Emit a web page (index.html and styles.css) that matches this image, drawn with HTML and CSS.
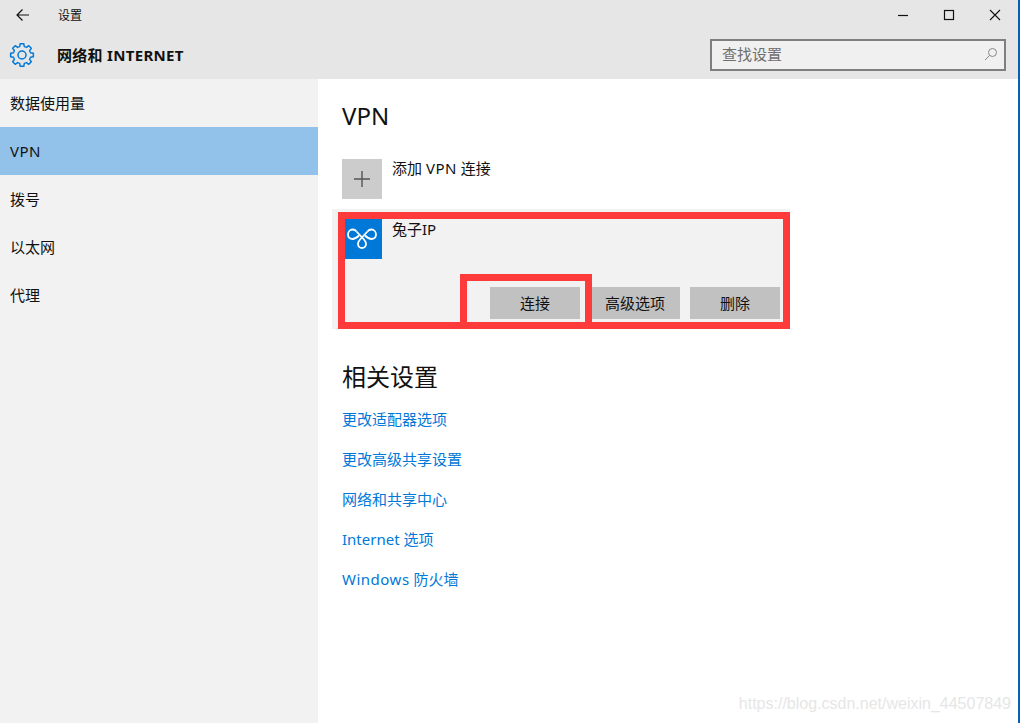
FILE: index.html
```html
<!DOCTYPE html>
<html lang="zh-CN">
<head>
    <meta charset="UTF-8">
    <title>设置</title>
    <link rel="stylesheet" href="styles.css">
</head>
<body>
    <div class="window">
        <header class="header">
            <div class="titlebar">
                <svg class="back" width="16" height="14" viewBox="0 0 16 14"><path d="M14 7H2M7.500 1.500L2 7l5.500 5.500" fill="none" stroke="#111" stroke-width="1.200"/></svg>
                <span class="title">设置</span>
                <div class="controls">
                    <svg width="12" height="12" viewBox="0 0 12 12"><path d="M1 6.500h10" stroke="#111" stroke-width="1.200"/></svg>
                    <svg width="12" height="12" viewBox="0 0 12 12"><rect x="1.500" y="1.500" width="9" height="9" fill="none" stroke="#111" stroke-width="1.200"/></svg>
                    <svg width="12" height="12" viewBox="0 0 12 12"><path d="M1 1l10 10M11 1L1 11" stroke="#111" stroke-width="1.100"/></svg>
                </div>
            </div>
            <div class="pagebar">
                <svg class="gear" width="26" height="26" viewBox="0 0 26 26">
                    <g fill="none" stroke="#0078d7" stroke-width="1.500" stroke-linejoin="round">
                        <path id="tooth" d="M9.630 4.870L10.720 4.500 11.200 1.640H14.800L15.280 4.500 16.370 4.870"/>
                        <use href="#tooth" transform="rotate(45 13 13)"/>
                        <use href="#tooth" transform="rotate(90 13 13)"/>
                        <use href="#tooth" transform="rotate(135 13 13)"/>
                        <use href="#tooth" transform="rotate(180 13 13)"/>
                        <use href="#tooth" transform="rotate(225 13 13)"/>
                        <use href="#tooth" transform="rotate(270 13 13)"/>
                        <use href="#tooth" transform="rotate(315 13 13)"/>
                        <circle cx="13" cy="13" r="4"/>
                    </g>
                </svg>
                <h1 class="pagename">网络和 INTERNET</h1>
                <div class="search">
                    <span>查找设置</span>
                    <svg width="14" height="14" viewBox="0 0 14 14"><circle cx="8.500" cy="5.500" r="4" fill="none" stroke="#888" stroke-width="1"/><path d="M5.500 8.500L1 13" stroke="#888" stroke-width="1"/></svg>
                </div>
            </div>
        </header>
        <div class="body">
            <nav class="sidebar">
                <a class="nav-item">数据使用量</a>
                <a class="nav-item active"><span class="wide">VPN</span></a>
                <a class="nav-item">拨号</a>
                <a class="nav-item">以太网</a>
                <a class="nav-item">代理</a>
            </nav>
            <main class="content">
                <h2 class="heading">VPN</h2>
                <div class="add-row">
                    <div class="tile tile-grey">
                        <svg width="18" height="18" viewBox="0 0 18 18"><path d="M9 1v16M1 9h16" stroke="#555" stroke-width="1.400"/></svg>
                    </div>
                    <span class="row-label">添加 <span class="wide">VPN</span> 连接</span>
                </div>
                <div class="vpn-card">
                    <div class="vpn-info">
                        <div class="tile tile-blue">
                            <svg width="37" height="40" viewBox="0 0 37 40"><g fill="none" stroke="#fff" stroke-width="1.800"><path d="M11.500 12.500C10.500 11 9 10.500 7.500 10.500 5 10.500 3 12.800 3 15.500S5 20 7.500 20C10 20 12 18.500 14 16.500"/><path d="M22.500 12.500C23.500 11 25 10.500 26.500 10.500 29 10.500 31 12.800 31 15.500S29 20 26.500 20C24 20 22 18.500 20 16.500"/><path d="M11.500 12.500L19 20.500C20.300 22 21 23.300 21 25A4 4 0 0 1 13 25C13 23.300 13.700 22 15 20.500L22.500 12.500"/></g></svg>
                        </div>
                        <span class="row-label vpn-name">兔子IP</span>
                    </div>
                    <div class="vpn-actions">
                        <button class="btn">连接</button>
                        <button class="btn">高级选项</button>
                        <button class="btn">删除</button>
                    </div>
                    <div class="mark mark-card"></div>
                    <div class="mark mark-connect"></div>
                </div>
                <h2 class="heading related">相关设置</h2>
                <div class="links">
                    <a class="link">更改适配器选项</a>
                    <a class="link">更改高级共享设置</a>
                    <a class="link">网络和共享中心</a>
                    <a class="link">Internet 选项</a>
                    <a class="link"><span class="wide">Windows</span> 防火墙</a>
                </div>
            </main>
        </div>
        <div class="watermark">https://blog.csdn.net/weixin_44507849</div>
    </div>
</body>
</html>
```

FILE: styles.css
```css
* {
    box-sizing: border-box;
}
html, body {
    height: 100%;
}
body {
    margin: 0;
    font-family: "Noto Sans", "Noto Sans CJK SC", sans-serif;
    font-size: 15px;
    line-height: 20px;
    color: #111;
    background: #fff;
}
.window {
    position: relative;
    height: 723px;
    display: flex;
    flex-direction: column;
    overflow: hidden;
    border-right: 2px solid #0a5fb4;
}
.header {
    height: 79px;
    background: #e6e6e6;
}
.titlebar {
    height: 30px;
    display: flex;
    align-items: center;
    padding-left: 15px;
}
.title {
    margin: 2px 0 0 27px;
    font-size: 12px;
}
.controls {
    margin-left: auto;
    display: flex;
    gap: 34px;
    padding-right: 17px;
}
.pagebar {
    height: 49px;
    display: flex;
    align-items: center;
    padding: 0 12px 0 9px;
}
.gear {
    flex: none;
}
.pagename {
    margin: 0 0 0 22px;
    font-size: 15px;
    font-weight: 700;
    letter-spacing: 0.3px;
}
.search {
    margin-left: auto;
    width: 296px;
    height: 32px;
    display: flex;
    align-items: center;
    justify-content: space-between;
    padding: 0 6px 2px 10px;
    border: 2px solid #7f7f7f;
    background: #f0f0f0;
    color: #6e6e6e;
}
.body {
    flex: 1;
    display: flex;
}
.sidebar {
    width: 318px;
    background: #f2f2f2;
}
.nav-item {
    display: flex;
    align-items: center;
    height: 48px;
    padding: 0 0 1px 10px;
}
.active {
    background: #92c1e9;
}
.wide {
    letter-spacing: 0.5px;
}
.content {
    flex: 1;
    padding: 19px 0 0 24px;
}
.heading {
    margin: 0;
    height: 35px;
    font-size: 24px;
    font-weight: 400;
    line-height: 35px;
}
.add-row {
    display: flex;
    gap: 10px;
    margin-top: 26px;
}
.row-label {
    margin-top: -1px;
}
.vpn-name {
    margin-top: 0;
}
.tile {
    width: 40px;
    height: 40px;
    display: flex;
    align-items: center;
    justify-content: center;
    flex: none;
}
.tile-grey {
    background: #ccc;
}
.tile-blue {
    background: #0078d7;
    width: 37px;
    margin-left: 3px;
}
.vpn-card {
    position: relative;
    width: 458px;
    height: 120px;
    margin: 10px 0 0 -10px;
    padding-top: 10px;
    background: #f2f2f2;
}
.vpn-info {
    display: flex;
    gap: 10px;
    padding-left: 10px;
}
.vpn-actions {
    display: flex;
    justify-content: flex-end;
    gap: 10px;
    margin-top: 28px;
    padding-right: 10px;
}
.btn {
    width: 90px;
    height: 32px;
    border: 0;
    padding: 0;
    background: #c1c1c1;
    font: inherit;
    color: #111;
}
.mark {
    position: absolute;
    border: 7px solid #fe3a3a;
}
.mark-card {
    left: 6px;
    top: 3px;
    width: 452px;
    height: 117px;
}
.mark-connect {
    left: 128px;
    top: 65px;
    width: 132px;
    height: 55px;
}
.related {
    margin-top: 30px;
}
.links {
    display: flex;
    flex-direction: column;
    gap: 20px;
    margin-top: 15px;
}
.link {
    color: #0078d7;
}
.watermark {
    position: absolute;
    right: 7px;
    bottom: 9px;
    font-family: "Liberation Sans", sans-serif;
    font-size: 16px;
    color: #e6e6e6;
}
```
